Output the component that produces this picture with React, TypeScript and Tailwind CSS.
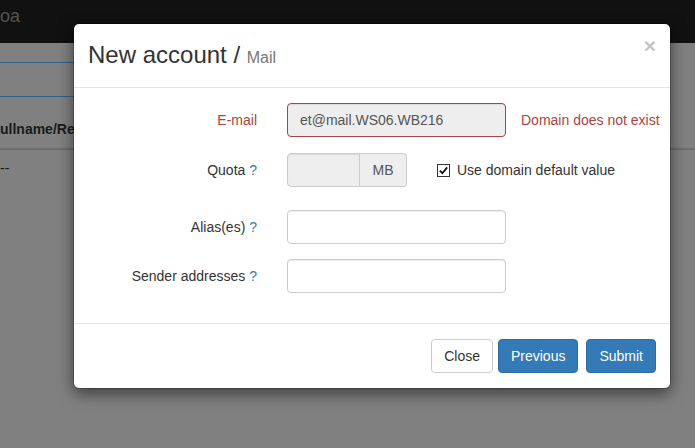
import React from 'react';

const font = { fontFamily: '"Liberation Sans", Arial, sans-serif' };

function Help() {
  return <span className="text-[#337ab7]">?</span>;
}

function FormRow({
  label,
  error,
  className,
  children,
}: {
  label: React.ReactNode;
  error?: boolean;
  className?: string;
  children: React.ReactNode;
}) {
  return (
    <div className={`flex h-[34px] items-center ${className ?? ''}`}>
      <label
        className={`w-[198px] shrink-0 pr-[15px] text-right text-[14px] leading-[20px] ${
          error ? 'text-[#a94442]' : 'text-[#333]'
        }`}
      >
        {label}
      </label>
      <div className="flex items-center pl-[15px]">{children}</div>
    </div>
  );
}

function TextInput() {
  return (
    <div className="h-[34px] w-[219px] rounded-[4px] border border-[#ccc] bg-white shadow-[inset_0_1px_1px_rgba(0,0,0,0.075)]" />
  );
}

export default function App() {
  return (
    <div className="relative h-[448px] w-[695px] overflow-hidden bg-[#808080]" style={font}>
      {/* page behind the backdrop */}
      <div className="h-[43px] bg-[#111] pt-[6px] text-[18px] leading-[20px] text-[#525252]">
        <span>oa</span>
      </div>
      <div className="mt-[19px] h-[35px] w-[160px] border-y border-[#30628e]" />
      <div className="mt-[22px] border-b-2 border-[#6f6f6f] pb-[9px] text-[14px] font-bold leading-[20px] text-[#1a1a1a]">
        <span>ullname/Realname</span>
      </div>
      <div className="pt-[8px] text-[14px] leading-[20px] text-[#1a1a1a]">--</div>

      {/* modal */}
      <div className="absolute left-[73px] top-[23px] w-[598px] rounded-[6px] border border-[rgba(0,0,0,0.2)] bg-white bg-clip-padding shadow-[0_5px_15px_rgba(0,0,0,0.5)]">
        <div className="flex h-[64px] items-start border-b border-[#e5e5e5] pl-[14px] pr-[14px]">
          <h4 className="pt-[17px] text-[24px] leading-[27px] text-[#333]">
            New account / <span className="text-[16px] text-[#777]">Mail</span>
          </h4>
          <button className="ml-auto mt-[11px] text-[21px] font-bold leading-[21px] text-[#c4c4c4]">×</button>
        </div>

        <div className="pb-[30px] pt-[15px]">
          <FormRow label="E-mail" error>
            <div className="flex h-[34px] w-[219px] items-center rounded-[4px] border border-[#a94442] bg-[#eee] px-[12px] text-[14px] text-[#555] shadow-[inset_0_1px_1px_rgba(0,0,0,0.075)]">
              et@mail.WS06.WB216
            </div>
            <span className="ml-[15px] text-[14px] text-[#a94442]">Domain does not exist</span>
          </FormRow>

          <FormRow label={<>Quota <Help /></>} className="mt-[16px]">
            <div className="flex h-[34px]">
              <div className="w-[73px] rounded-l-[4px] border border-[#ccc] bg-[#eee] shadow-[inset_0_1px_1px_rgba(0,0,0,0.075)]" />
              <div className="flex w-[47px] items-center justify-center rounded-r-[4px] border border-l-0 border-[#ccc] bg-[#eee] text-[14px] text-[#555]">
                MB
              </div>
            </div>
            <label className="ml-[30px] flex items-center text-[14px] text-[#333]">
              <span className="flex h-[13px] w-[13px] items-center justify-center border border-[#333] bg-white">
                <svg viewBox="0 0 12 12" className="h-[11px] w-[11px]">
                  <path d="M2 6.2 L4.8 9 L10 2.6" fill="none" stroke="#111" strokeWidth="2" />
                </svg>
              </span>
              <span className="ml-[7px]">Use domain default value</span>
            </label>
          </FormRow>

          <FormRow label={<>Alias(es) <Help /></>} className="mt-[23px]">
            <TextInput />
          </FormRow>

          <FormRow label={<>Sender addresses <Help /></>} className="mt-[15px]">
            <TextInput />
          </FormRow>
        </div>

        <div className="flex justify-end border-t border-[#e5e5e5] px-[14px] py-[15px] text-[14px] leading-[20px]">
          <button className="rounded-[4px] border border-[#ccc] bg-white px-[12px] py-[6px] text-[#333]">Close</button>
          <button className="ml-[5px] rounded-[4px] border border-[#2e6da4] bg-[#337ab7] px-[12px] py-[6px] text-white">
            Previous
          </button>
          <button className="ml-[8px] rounded-[4px] border border-[#2e6da4] bg-[#337ab7] px-[12px] py-[6px] text-white">
            Submit
          </button>
        </div>
      </div>
    </div>
  );
}
